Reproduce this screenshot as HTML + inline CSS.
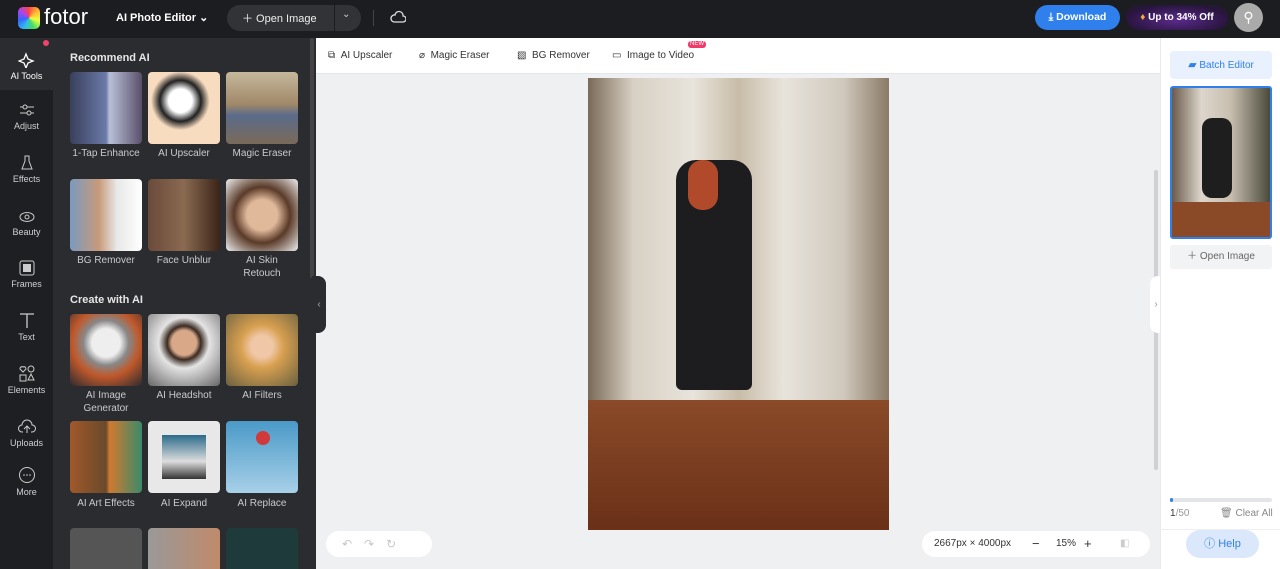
<!DOCTYPE html>
<html style="width:1280px;height:569px;overflow:hidden"><head><meta charset="utf-8"><style>
*{margin:0;padding:0;box-sizing:border-box}
body{width:1280px;height:569px;overflow:hidden;font-family:"Liberation Sans",sans-serif;background:#eef0f2;position:relative}
.a{position:absolute}
.top{left:0;top:0;width:1280px;height:38px;background:#1c1d20}
.side{left:0;top:38px;width:53px;height:531px;background:#1e1f22}
.panel{left:53px;top:38px;width:263px;height:531px;background:#2b2c2f;overflow:hidden}
.si{position:absolute;left:0;width:53px;text-align:center;color:#cfd0d3;font-size:9px}
.si svg{display:block;margin:0 auto 3px}
.t{position:absolute;width:72px;height:72px;border-radius:4px}
.lb{position:absolute;width:90px;text-align:center;color:#c9cacd;font-size:10px;line-height:13px}
.h{position:absolute;color:#e6e6e8;font-size:11px;font-weight:bold}
.tb{font-size:10px;color:#333;position:absolute;top:50px}
</style></head><body>
<div class="a top">
 <div class="a" style="left:18px;top:7px;width:22px;height:22px;border-radius:5px;background:conic-gradient(#f44,#fb3,#ef4,#4d6,#3be,#36f,#a4e,#f44)"></div>
 <div class="a" style="left:44px;top:4px;color:#fff;font-size:22px">fotor</div>
 <div class="a" style="left:116px;top:11px;color:#fff;font-size:11px;font-weight:bold">AI Photo Editor ⌄</div>
 <div class="a" style="left:227px;top:5px;width:134px;height:26px;border-radius:13px;background:#323337"></div>
 <div class="a" style="left:334px;top:5px;width:1px;height:26px;background:#1c1d20"></div>
 <div class="a" style="left:242px;top:10px;color:#eee;font-size:11px">＋ Open Image</div>
 <div class="a" style="left:342px;top:9px;color:#ccc;font-size:10px">⌄</div>
 <div class="a" style="left:373px;top:10px;width:1px;height:16px;background:#444"></div>
 <svg class="a" style="left:390px;top:10px" width="16" height="14"><path d="M4 12h9a3 3 0 0 0 0-6 4 4 0 0 0-8-1 3 3 0 0 0-1 7z" fill="none" stroke="#ddd" stroke-width="1.3"/></svg>
 <div class="a" style="left:1035px;top:5px;width:85px;height:25px;border-radius:13px;background:#2f80ed;color:#fff;font-size:10.5px;font-weight:bold;line-height:25px;text-align:center">⤓ Download</div>
 <div class="a" style="left:1126px;top:5px;width:102px;height:25px;border-radius:13px;background:radial-gradient(ellipse at 50% 60%,#5b2a8c,#2a1540 70%,#1c1d20);color:#fff;font-size:10px;font-weight:bold;line-height:25px;text-align:center"><span style="color:#f7a93a">♦</span> Up to 34% Off</div>
 <div class="a" style="left:1234px;top:3px;width:29px;height:29px;border-radius:50%;background:#aaa;color:#fff;text-align:center;line-height:29px;font-size:14px">⚲</div>
</div>
<div class="a side">
 <div class="a" style="left:0;top:0;width:53px;height:52px;background:#2b2c2f"></div>
 <div class="a" style="left:43px;top:2px;width:6px;height:6px;border-radius:50%;background:#f0446a"></div>
 <div class="si" style="top:12px;color:#fff"><svg width="18" height="18"><path d="M8 4l2 5 5 2-5 2-2 5-2-5-5-2 5-2z" fill="none" stroke="#fff" stroke-width="1.3"/></svg>AI Tools</div>
 <div class="si" style="top:64px"><svg width="18" height="16"><path d="M2 5h14M2 11h14" stroke="#ccc"/><circle cx="7" cy="5" r="2" fill="#1e1f22" stroke="#ccc"/><circle cx="11" cy="11" r="2" fill="#1e1f22" stroke="#ccc"/></svg>Adjust</div>
 <div class="si" style="top:117px"><svg width="18" height="16"><path d="M7 1h4v5l3 8H4l3-8z" fill="none" stroke="#ccc"/></svg>Effects</div>
 <div class="si" style="top:170px"><svg width="18" height="16"><ellipse cx="9" cy="9" rx="7" ry="4.5" fill="none" stroke="#ccc"/><circle cx="9" cy="9" r="2" fill="none" stroke="#ccc"/></svg>Beauty</div>
 <div class="si" style="top:222px"><svg width="18" height="16"><rect x="2" y="1" width="14" height="14" rx="2" fill="none" stroke="#ccc"/><rect x="5" y="4" width="8" height="8" fill="#ccc"/></svg>Frames</div>
 <div class="si" style="top:274px"><svg width="18" height="17"><path d="M2 2h14M9 2v14" stroke="#ccc" stroke-width="1.3"/></svg>Text</div>
 <div class="si" style="top:327px"><svg width="18" height="17"><circle cx="13" cy="4" r="3" fill="none" stroke="#ccc"/><rect x="2" y="10" width="6" height="6" fill="none" stroke="#ccc"/><path d="M13 9l3 6h-6z" fill="none" stroke="#ccc"/><path d="M5 7L2 4a2 2 0 0 1 3-2 2 2 0 0 1 3 2z" fill="none" stroke="#ccc"/></svg>Elements</div>
 <div class="si" style="top:380px"><svg width="18" height="17"><path d="M5 14H4a3 3 0 0 1 0-7 5 5 0 0 1 10 0 3 3 0 0 1 0 7h-1M9 15V8M6 11l3-3 3 3" fill="none" stroke="#ccc"/></svg>Uploads</div>
 <div class="si" style="top:428px"><svg width="18" height="18"><circle cx="9" cy="9" r="7.5" fill="none" stroke="#ccc"/><circle cx="6" cy="9" r=".8" fill="#ccc"/><circle cx="9" cy="9" r=".8" fill="#ccc"/><circle cx="12" cy="9" r=".8" fill="#ccc"/></svg>More</div>
</div>
<div class="a panel">
 <div class="h" style="left:17px;top:14px">Recommend AI</div>
 <div class="t" style="left:17px;top:34px;background:linear-gradient(90deg,#3a3f5c,#6a7aa8 50%,#b8c0d8 55%,#5a4f6a)"></div>
 <div class="t" style="left:95px;top:34px;background:radial-gradient(circle at 45% 40%,#fff 0 20%,#222 35%,#f7dcc0 50%)"></div>
 <div class="t" style="left:173px;top:34px;background:linear-gradient(#c6b89c,#a08868 45%,#5a6b8a 60%,#7a6a58)"></div>
 <div class="lb" style="left:8px;top:109px">1-Tap Enhance</div>
 <div class="lb" style="left:86px;top:109px">AI Upscaler</div>
 <div class="lb" style="left:164px;top:109px">Magic Eraser</div>
 <div class="t" style="left:17px;top:141px;background:linear-gradient(90deg,#7a9ac0,#c89a7a 40%,#e8e8e8 65%,#fff)"></div>
 <div class="t" style="left:95px;top:141px;background:linear-gradient(90deg,#6a4a3a,#8a6a50 50%,#3a2418)"></div>
 <div class="t" style="left:173px;top:141px;background:radial-gradient(circle at 50% 50%,#e0b89a 0 30%,#5a3a28 55%,#eee)"></div>
 <div class="lb" style="left:8px;top:216px">BG Remover</div>
 <div class="lb" style="left:86px;top:216px">Face Unblur</div>
 <div class="lb" style="left:164px;top:216px">AI Skin<br>Retouch</div>
 <div class="h" style="left:17px;top:256px">Create with AI</div>
 <div class="t" style="left:17px;top:276px;background:radial-gradient(circle at 50% 40%,#eee 0 25%,#888 40%,#c0582a 60%,#2a2a30)"></div>
 <div class="t" style="left:95px;top:276px;background:radial-gradient(circle at 50% 40%,#d8a888 0 22%,#3a2a22 30%,#e4e4e4 45%,#666)"></div>
 <div class="t" style="left:173px;top:276px;background:radial-gradient(circle at 50% 45%,#f0c8a8 0 20%,#d8a050 40%,#6a6040)"></div>
 <div class="lb" style="left:8px;top:351px">AI Image<br>Generator</div>
 <div class="lb" style="left:86px;top:351px">AI Headshot</div>
 <div class="lb" style="left:164px;top:351px">AI Filters</div>
 <div class="t" style="left:17px;top:383px;background:linear-gradient(90deg,#a0582a,#6a4a2a 50%,#d07a30 55%,#3a8a6a)"></div>
 <div class="t" style="left:95px;top:383px;background:#e8e8e8"><div class="a" style="left:14px;top:14px;width:44px;height:44px;background:linear-gradient(#2a6a8a,#ddd 60%,#333)"></div></div>
 <div class="t" style="left:173px;top:383px;background:linear-gradient(#4a9ac8,#a8d0e8)"><div class="a" style="left:30px;top:10px;width:14px;height:14px;border-radius:50%;background:#d03a3a"></div></div>
 <div class="lb" style="left:8px;top:459px">AI Art Effects</div>
 <div class="lb" style="left:86px;top:459px">AI Expand</div>
 <div class="lb" style="left:164px;top:459px">AI Replace</div>
 <div class="t" style="left:17px;top:490px;height:41px;border-radius:4px 4px 0 0;background:#555"></div>
 <div class="t" style="left:95px;top:490px;height:41px;border-radius:4px 4px 0 0;background:linear-gradient(90deg,#999,#c08a6a)"></div>
 <div class="t" style="left:173px;top:490px;height:41px;border-radius:4px 4px 0 0;background:#1e3a3a"></div>
 <div class="a" style="left:257px;top:0;width:4px;height:240px;background:#444;border-radius:2px"></div>
</div>
<div class="a" style="left:316px;top:38px;width:844px;height:36px;background:#fff;border-bottom:1px solid #e4e6e9"></div>
<div class="tb" style="left:328px">⧉ &nbsp;AI Upscaler</div>
<div class="tb" style="left:419px">⌀ &nbsp;Magic Eraser</div>
<div class="tb" style="left:517px">▧ &nbsp;BG Remover</div>
<div class="tb" style="left:612px">▭ &nbsp;Image to Video</div>
<div class="a" style="left:688px;top:41px;background:#f03a6a;color:#fff;font-size:6px;line-height:7px;padding:0 2px;border-radius:3px">NEW</div>
<div class="a" style="left:312px;top:276px;width:14px;height:57px;background:#2b2c2f;border-radius:0 8px 8px 0;color:#aaa;font-size:10px;line-height:57px;text-align:center">‹</div>
<div class="a" style="left:588px;top:78px;width:301px;height:452px;background:linear-gradient(90deg,#7a6a58,#d8d0c4 15%,#e8e4dc 35%,#c8bca8 50%,#e8e4dc 65%,#cfc8bc 85%,#8a7a66)"></div>
<div class="a" style="left:588px;top:400px;width:301px;height:130px;background:linear-gradient(#8a4a28,#6a3018)"></div>
<div class="a" style="left:676px;top:160px;width:76px;height:230px;background:#1d1d1f;border-radius:20px 20px 6px 6px"></div>
<div class="a" style="left:688px;top:160px;width:30px;height:50px;background:#b04a2a;border-radius:14px"></div>
<div class="a" style="left:1154px;top:170px;width:4px;height:300px;background:#cfd1d4;border-radius:2px"></div>
<div class="a" style="left:1150px;top:276px;width:12px;height:57px;background:#fff;border-radius:8px 0 0 8px;color:#999;font-size:10px;line-height:57px;text-align:center">›</div>
<div class="a" style="left:326px;top:531px;width:106px;height:26px;border-radius:13px;background:#fff;color:#c8c8c8;font-size:12px;line-height:26px;padding-left:16px;letter-spacing:12px">↶↷↻</div>
<div class="a" style="left:922px;top:531px;width:228px;height:26px;border-radius:13px;background:#fff;font-size:10px;color:#333;line-height:26px">
 <span class="a" style="left:12px">2667px × 4000px</span><span class="a" style="left:110px;font-size:13px">−</span><span class="a" style="left:134px">15%</span><span class="a" style="left:162px;font-size:13px">+</span><span class="a" style="left:198px;color:#ccc">◧</span>
</div>
<div class="a" style="left:1160px;top:38px;width:120px;height:531px;background:#fff;border-left:1px solid #e8e9eb"></div>
<div class="a" style="left:1170px;top:51px;width:102px;height:28px;border-radius:4px;background:#e8f1fd;color:#2f80ed;font-size:10px;line-height:28px;text-align:center"><span style="font-size:11px">▰</span> Batch Editor</div>
<div class="a" style="left:1170px;top:86px;width:102px;height:153px;border:2px solid #2f80ed;border-radius:3px;background:linear-gradient(90deg,#6a5a4a,#ddd6cc 30%,#c8beb0 60%,#4a4a3a);overflow:hidden"><div class="a" style="left:30px;top:30px;width:30px;height:80px;background:#1e1e1e;border-radius:10px"></div><div class="a" style="left:0;bottom:0;width:98px;height:35px;background:#8a4a28"></div></div>
<div class="a" style="left:1170px;top:245px;width:102px;height:24px;border-radius:3px;background:#f2f3f5;color:#666;font-size:10px;line-height:24px;text-align:center">＋ Open Image</div>
<div class="a" style="left:1170px;top:498px;width:102px;height:4px;border-radius:2px;background:#e4e5e8"><div style="width:3px;height:4px;background:#2f80ed;border-radius:2px"></div></div>
<div class="a" style="left:1170px;top:508px;font-size:10px;color:#999"><b style="color:#333;font-weight:normal">1</b>/50</div>
<div class="a" style="left:1220px;top:508px;font-size:10px;color:#888">🗑 Clear All</div>
<div class="a" style="left:1160px;top:529px;width:120px;height:1px;background:#eee"></div>
<div class="a" style="left:1186px;top:530px;width:73px;height:28px;border-radius:14px;background:#dbe8fc;color:#2f80ed;font-size:11px;line-height:28px;text-align:center">ⓘ Help</div>
</body></html>
